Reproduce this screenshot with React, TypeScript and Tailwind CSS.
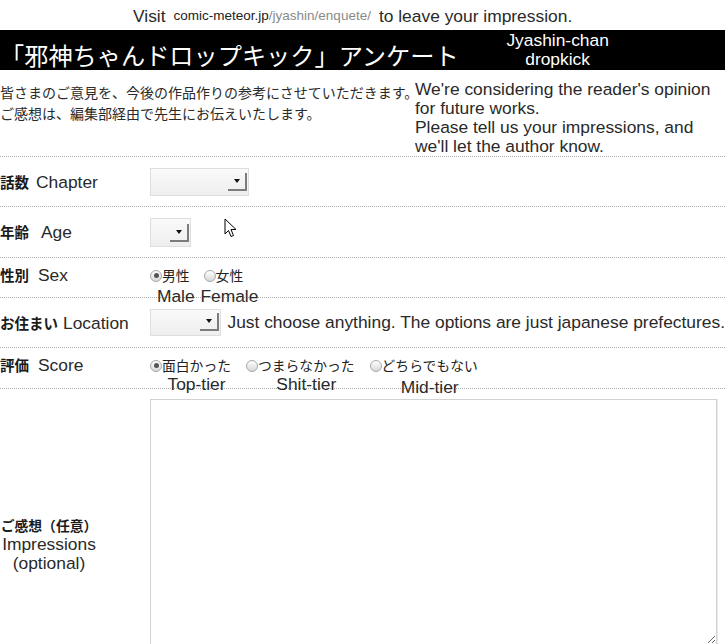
import React from 'react'

const jp = "font-['Noto_Sans_CJK_JP','Liberation_Sans',sans-serif]"

function Select({ w, h }: { w: string; h: string }) {
  return (
    <div className={`${w} ${h} flex items-end justify-end pr-[1px] pb-[4px] border border-[#dedede] bg-gradient-to-b from-[#fafafa] to-[#eeeeee]`}>
      <div className="w-[19px] h-[18px] flex items-center justify-center border-r-2 border-b-2 border-[#7c7c7c]">
        <div className="w-0 h-0 border-l-[3px] border-r-[3px] border-t-[4px] border-l-transparent border-r-transparent border-t-[#111]" />
      </div>
    </div>
  )
}

function Radio({ checked }: { checked?: boolean }) {
  return (
    <span className="w-[12px] h-[12px] shrink-0 rounded-full border border-[#a8a8a8] bg-gradient-to-b from-[#ffffff] to-[#d8d8d8] flex items-center justify-center">
      {checked && <span className="w-[5px] h-[5px] rounded-full bg-[#555]" />}
    </span>
  )
}

function Option({ ja, en, checked, enClass = '', enLeading }: { ja: string; en: string; checked?: boolean; enClass?: string; enLeading: string }) {
  return (
    <div className="flex items-start">
      <div className="h-[20px] pt-[1px] flex items-center">
        <Radio checked={checked} />
      </div>
      <div className="flex flex-col items-center">
        <span className={`${jp} text-[13.8px] leading-[20px] text-[#222]`}>{ja}</span>
        <div className="w-0 flex justify-center">
          <span className={`whitespace-nowrap text-[17.4px] ${enLeading} text-[#2a2a2a] ${enClass}`}>{en}</span>
        </div>
      </div>
    </div>
  )
}

function Label({ ja, en, gap }: { ja: string; en: string; gap: string }) {
  return (
    <div className="w-[150px] shrink-0 flex items-center leading-[20px]">
      <span className={`${jp} font-bold text-[14.5px] text-[#1a1a1a]`}>{ja}</span>
      <span className={`${gap} text-[17.4px] text-[#2a2a2a]`}>{en}</span>
    </div>
  )
}

export default function App() {
  return (
    <div className="w-[725px] h-[644px] overflow-hidden bg-white relative font-['Liberation_Sans','Noto_Sans_CJK_JP',sans-serif] text-[#2a2a2a]">
      {/* top notice */}
      <div className="h-[30px] flex items-center pl-[133px] pt-[2px] whitespace-nowrap">
        <span className="text-[17.4px]">Visit</span>
        <span className="ml-[8px] text-[13.5px] text-[#222]">comic-meteor.jp</span>
        <span className="text-[13.5px] text-[#8a8a8a]">/jyashin/enquete/</span>
        <span className="ml-[8px] text-[17.4px]">to leave your impression.</span>
      </div>

      {/* title bar */}
      <div className="h-[40px] bg-black flex text-white">
        <span className={`${jp} self-end text-[24.2px] leading-[30px] whitespace-nowrap`}>「邪神ちゃんドロップキック」アンケート</span>
        <div className="ml-[47px] w-[104px] text-center text-[17.4px] leading-[19px] pt-[1px]">
          <div>Jyashin-chan</div>
          <div>dropkick</div>
        </div>
      </div>

      {/* intro */}
      <div className="h-[87px] flex border-b border-dotted border-[#b0b0b0]">
        <div className={`${jp} w-[415px] shrink-0 pt-[12px] text-[14px] leading-[21px] text-[#2a2a2a] whitespace-nowrap`}>
          <div>皆さまのご意見を、今後の作品作りの参考にさせていただきます。</div>
          <div>ご感想は、編集部経由で先生にお伝えいたします。</div>
        </div>
        <div className="pt-[10px] text-[17.4px] leading-[19px] whitespace-nowrap">
          <div>We're considering the reader's opinion</div>
          <div>for future works.</div>
          <div>Please tell us your impressions, and</div>
          <div>we'll let the author know.</div>
        </div>
      </div>

      {/* chapter */}
      <div className="h-[50px] flex items-center border-b border-dotted border-[#b0b0b0]">
        <Label ja="話数" en="Chapter" gap="ml-[7px]" />
        <Select w="w-[99px]" h="h-[28px]" />
      </div>

      {/* age */}
      <div className="h-[51px] flex items-center border-b border-dotted border-[#b0b0b0]">
        <Label ja="年齢" en="Age" gap="ml-[12px]" />
        <Select w="w-[41px]" h="h-[29px]" />
      </div>

      {/* sex */}
      <div className="h-[40px] flex items-start pt-[7px] border-b border-dotted border-[#b0b0b0]">
        <Label ja="性別" en="Sex" gap="ml-[9px]" />
        <div className="flex items-start gap-[14px]">
          <Option ja="男性" en="Male" checked enLeading="leading-[22px]" />
          <Option ja="女性" en="Female" enLeading="leading-[22px]" />
        </div>
      </div>

      {/* location */}
      <div className="h-[50px] flex items-center border-b border-dotted border-[#b0b0b0]">
        <Label ja="お住まい" en="Location" gap="ml-[5px]" />
        <Select w="w-[72px]" h="h-[27px]" />
        <span className="ml-[6px] text-[17.4px] whitespace-nowrap">Just choose anything. The options are just japanese prefectures.</span>
      </div>

      {/* score */}
      <div className="h-[41px] flex items-start pt-[7px] border-b border-dotted border-[#b0b0b0]">
        <Label ja="評価" en="Score" gap="ml-[9px]" />
        <div className="flex items-start gap-[15px]">
          <Option ja="面白かった" en="Top-tier" checked enLeading="leading-[18px]" />
          <Option ja="つまらなかった" en="Shit-tier" enLeading="leading-[18px]" />
          <Option ja="どちらでもない" en="Mid-tier" enClass="pt-[3px]" enLeading="leading-[18px]" />
        </div>
      </div>

      {/* impressions */}
      <div className="flex items-start">
        <div className="w-[150px] shrink-0">
          <div className="w-[98px] mt-[127px] text-center">
            <div className={`${jp} font-bold text-[13.8px] leading-[19px] text-[#1a1a1a]`}>ご感想（任意）</div>
            <div className="text-[17.4px] leading-[19px]">Impressions</div>
            <div className="text-[17.4px] leading-[19px]">(optional)</div>
          </div>
        </div>
        <textarea className="mt-[10px] w-[567px] h-[246px] border border-[#d2d2d2] shadow-[1px_0_0_#e8e8e8] bg-white outline-none" />
      </div>

      {/* mouse pointer */}
      <svg className="absolute left-[224px] top-[218px]" width="13" height="20" viewBox="0 0 13 20">
        <path d="M1 1 L1 16 L4.5 12.5 L7 18.5 L9.5 17.5 L7 11.5 L12 11.5 Z" fill="#fff" stroke="#000" strokeWidth="1" strokeLinejoin="round" />
      </svg>
    </div>
  )
}
